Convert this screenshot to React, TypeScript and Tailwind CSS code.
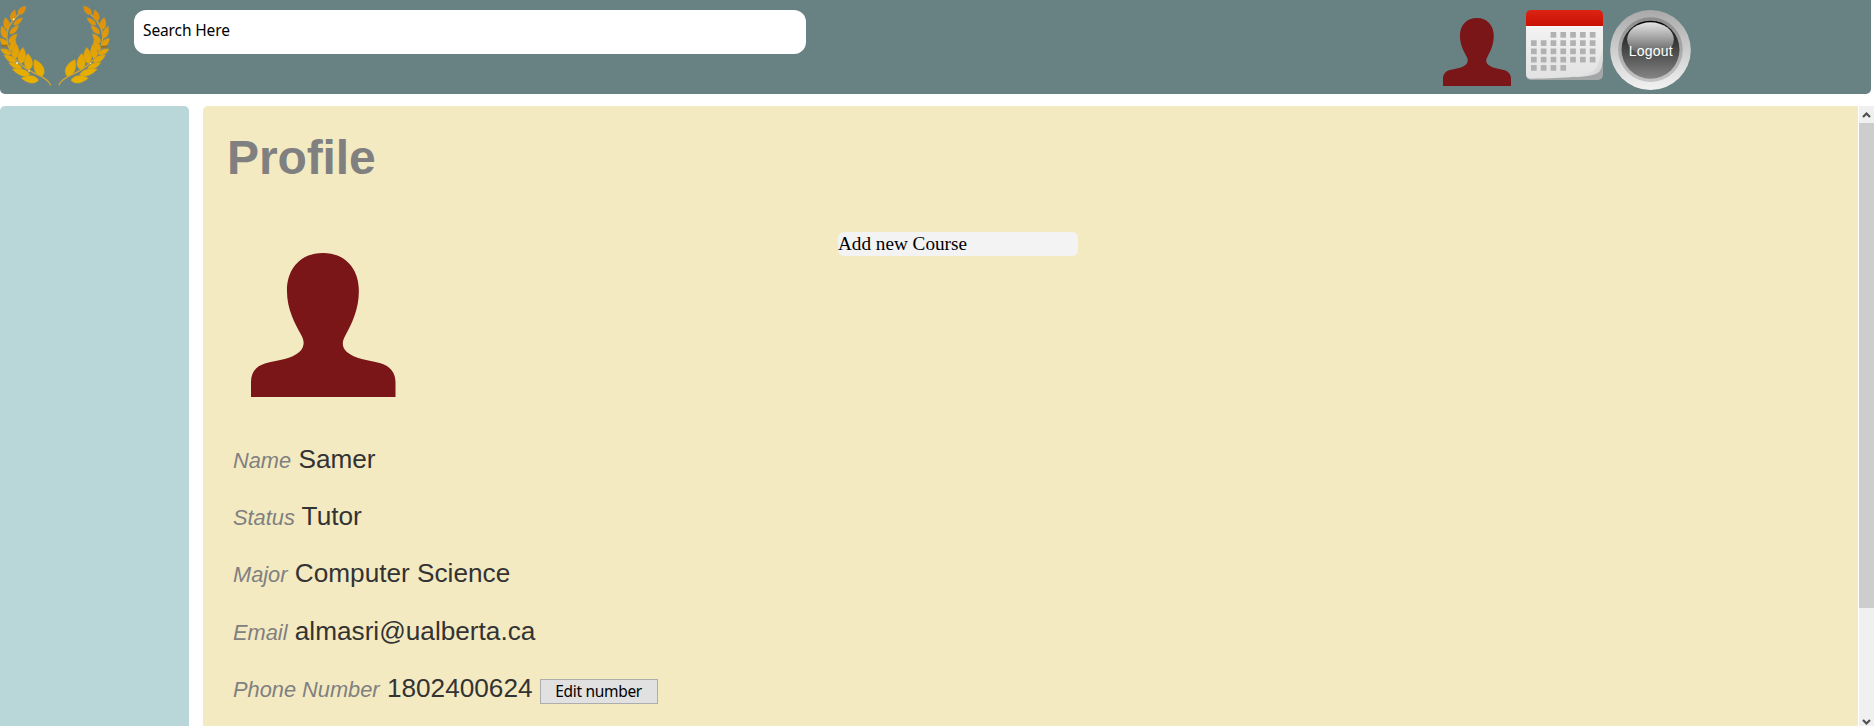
import React from "react";

type Leaf = [number, number, number, number, number];

// base x, base y, tip x, tip y, half width
const leaves: Leaf[] = [
  [55, 43, 78, 18, 13],
  [36, 63, 44, 29, 13],
  [41, 75, 68, 53, 10],
  [23, 90, 16, 52, 14],
  [30, 102, 56, 76, 11],
  [18, 115, 4, 78, 13],
  [27, 129, 51, 101, 12],
  [22, 139, 0, 114, 12],
  [32, 153, 46, 118, 14],
  [33, 163, 1, 147, 12],
  [44, 176, 50, 132, 16],
  [49, 187, 12, 165, 13],
  [63, 191, 69, 142, 18],
  [66, 206, 26, 188, 12],
  [87, 210, 83, 160, 19],
  [90, 225, 36, 207, 15],
  [128, 229, 103, 178, 21],
  [116, 241, 63, 234, 17],
];

function leafPath([bx, by, tx, ty, w]: Leaf): string {
  const dx = tx - bx;
  const dy = ty - by;
  const len = Math.hypot(dx, dy);
  const nx = (-dy / len) * w;
  const ny = (dx / len) * w;
  const ax = bx + dx * 0.2;
  const ay = by + dy * 0.2;
  const cx = bx + dx * 0.65;
  const cy = by + dy * 0.65;
  return `M${bx} ${by}C${ax + nx} ${ay + ny} ${cx + nx * 0.8} ${cy + ny * 0.8} ${tx} ${ty}C${cx - nx * 0.8} ${cy - ny * 0.8} ${ax - nx} ${ay - ny} ${bx} ${by}Z`;
}

function Branch() {
  return (
    <>
      <path d="M152 256C148 242 128 230 105 220C62 200 28 166 21 122C17 92 33 63 60 40" fill="none" stroke="#d6a52a" strokeWidth="4" />
      {leaves.map((l, i) => (
        <path key={i} d={leafPath(l)} fill="url(#gold)" stroke="#ad9645" strokeWidth="1" />
      ))}
    </>
  );
}

function Wreath() {
  return (
    <svg className="block h-[87px] w-[110px]" viewBox="0 0 330 261">
      <defs>
        <linearGradient id="gold" gradientUnits="userSpaceOnUse" x1="0" y1="18" x2="0" y2="256">
          <stop offset="0" stopColor="#dd8b0c" />
          <stop offset="1" stopColor="#e8b400" />
        </linearGradient>
      </defs>
      <Branch />
      <g transform="translate(328.5 0) scale(-1 1)">
        <Branch />
      </g>
      <g fill="#fff3c4">
        <circle cx="41" cy="58" r="3" />
        <circle cx="51" cy="189" r="3" />
        <circle cx="87" cy="213" r="2.5" />
        <circle cx="272" cy="190" r="2" />
      </g>
      <path d="M5 137h17M302 140h19" stroke="#9b6b10" strokeWidth="5" />
    </svg>
  );
}

function Person({ className }: { className: string }) {
  return (
    <svg className={className} viewBox="0 0 434 432" preserveAspectRatio="none">
      <path
        fill="#7a1518"
        d="M216 0C151 0 108 45 108 113C108 170 133 213 152 248C161 265 161 282 145 297C122 318 85 320 44 331C14 340 0 358 0 388V432H434V388C434 358 418 340 389 331C349 320 312 318 288 297C272 282 273 265 283 248C302 213 324 170 324 113C324 45 281 0 216 0Z"
      />
    </svg>
  );
}

function Calendar() {
  const cells: [number, number][] = [];
  for (let r = 0; r < 5; r++) {
    for (let c = 0; c < 7; c++) {
      if ((r === 0 && c < 2) || (r === 4 && c > 3)) continue;
      cells.push([c, r]);
    }
  }
  return (
    <svg className="block h-[70px] w-[77px]" viewBox="0 0 231 210">
      <defs>
        <linearGradient id="red" x1="0" y1="0" x2="0" y2="1">
          <stop offset="0" stopColor="#dc2414" />
          <stop offset="1" stopColor="#c71103" />
        </linearGradient>
        <linearGradient id="paper" x1="0" y1="0" x2="0" y2="1">
          <stop offset="0" stopColor="#f3f3f3" />
          <stop offset="1" stopColor="#e2e2e2" />
        </linearGradient>
        <linearGradient id="fold" x1="0" y1="0" x2="1" y2="0.7">
          <stop offset="0" stopColor="#ffffff" />
          <stop offset="1" stopColor="#d5d5d5" />
        </linearGradient>
      </defs>
      <rect y="8" width="231" height="202" rx="15" fill="#a4a7a7" />
      <path d="M0 40H231V120C231 160 227 178 215 186C185 200 120 204 15 206Q0 206 0 191Z" fill="url(#paper)" />
      <path d="M231 112C222 145 218 160 210 174C200 188 175 192 140 201C185 201 216 195 223 181C230 168 231 140 231 112Z" fill="url(#fold)" />
      <path d="M0 49V16Q0 0 16 0H215Q231 0 231 16V49Z" fill="url(#red)" />
      <path d="M0 50H231" stroke="#fff" strokeWidth="3" />
      {cells.map(([c, r]) => (
        <rect key={`${c}-${r}`} x={15 + c * 29.4} y={66 + r * 24.8} width="17" height="17" fill="#b1b1b1" />
      ))}
    </svg>
  );
}

function Logout() {
  return (
    <svg className="block h-[80px] w-[81px]" viewBox="0 0 243 240" preserveAspectRatio="none">
      <defs>
        <linearGradient id="rim" x1="0" y1="0" x2="0" y2="1">
          <stop offset="0" stopColor="#a9a9a9" />
          <stop offset="1" stopColor="#f2f2f2" />
        </linearGradient>
        <linearGradient id="ring" x1="0" y1="0" x2="0" y2="1">
          <stop offset="0" stopColor="#8b8b8b" />
          <stop offset="1" stopColor="#c5c5c5" />
        </linearGradient>
        <linearGradient id="core" x1="0" y1="0" x2="0" y2="1">
          <stop offset="0" stopColor="#000" />
          <stop offset="0.35" stopColor="#343434" />
          <stop offset="1" stopColor="#858585" />
        </linearGradient>
        <linearGradient id="gloss" x1="0" y1="0" x2="0" y2="1">
          <stop offset="0" stopColor="#e4e4e4" />
          <stop offset="1" stopColor="#555" />
        </linearGradient>
      </defs>
      <ellipse cx="121.5" cy="120" rx="121" ry="120" fill="url(#rim)" />
      <circle cx="121.5" cy="119" r="97" fill="url(#ring)" />
      <circle cx="121.5" cy="119" r="87" fill="url(#core)" />
      <ellipse cx="121.5" cy="88" rx="70" ry="51" fill="url(#gloss)" />
      <text x="122" y="139" textAnchor="middle" fill="#fff" fontSize="42" textLength="132" className="font-['Liberation_Sans',sans-serif]">
        Logout
      </text>
    </svg>
  );
}

function Row({ label, value, children }: { label: string; value: string; children?: React.ReactNode }) {
  return (
    <div className="flex h-[57.2px] items-baseline whitespace-pre font-['Liberation_Sans',sans-serif] leading-[30px]">
      <span className="text-[21.8px] italic text-[#808080]">{label}</span>
      <span className="text-[26.2px] text-[#333]"> {value}</span>
      {children}
    </div>
  );
}

export default function App() {
  return (
    <div className="flex h-[726px] w-full flex-col gap-3 overflow-hidden bg-white">
      <header className="flex h-[94px] w-[1871px] shrink-0 items-start rounded-b-[5px] bg-[#688284]">
        <Wreath />
        <div className="mt-[10px] ml-[24px] flex h-[44px] w-[672px] items-center rounded-[12px] bg-white pb-[3px] pl-[9px] font-['Noto_Sans',sans-serif] text-[15.5px] text-black">
          <span className="tracking-[-0.12px]">Search Here</span>
        </div>
        <Person className="mt-[18px] ml-[637px] block h-[68px] w-[68px]" />
        <div className="mt-[10px] ml-[15px]">
          <Calendar />
        </div>
        <div className="mt-[10px] ml-[7px]">
          <Logout />
        </div>
      </header>
      <div className="flex min-h-0 flex-1">
        <aside className="w-[189px] shrink-0 rounded-t-[5px] bg-[#b9d6d8]" />
        <main className="ml-[14px] flex w-[1655px] shrink-0 rounded-tl-[5px] bg-[#f4eac2]">
          <div className="w-[635px] shrink-0 pt-[24px]">
            <h1 className="ml-[24px] font-['Liberation_Sans',sans-serif] text-[48px] leading-[56px] font-bold tracking-[-0.1px] text-[#808080]">Profile</h1>
            <Person className="mt-[67px] ml-[48px] block h-[144px] w-[144.5px]" />
            <div className="mt-[47px] ml-[30px]">
              <Row label="Name" value="Samer" />
              <Row label="Status" value="Tutor" />
              <Row label="Major" value="Computer Science" />
              <Row label="Email" value="almasri@ualberta.ca" />
              <Row label="Phone Number" value="1802400624">
                <button className="ml-[7px] h-[25px] w-[118px] border border-[#adadad] bg-[#e1e1e1] font-['Noto_Sans',sans-serif] text-[15.5px] leading-[23px] tracking-[-0.3px] text-black">
                  Edit number
                </button>
              </Row>
            </div>
          </div>
          <div className="mt-[126px] h-[24px] w-[240px] rounded-[6px] bg-[#f3f3f3] font-['Liberation_Serif',serif] text-[19.2px] leading-[24px] text-black">
            Add new Course
          </div>
        </main>
        <div className="ml-px flex w-[15px] shrink-0 flex-col bg-[#f0f0f0]">
          <svg className="h-[17px] w-[15px]" viewBox="0 0 15 17">
            <path d="M4 11L7.5 7.5L11 11" fill="none" stroke="#505050" strokeWidth="2.2" />
          </svg>
          <div className="h-[485px] bg-[#cdcdcd]" />
          <svg className="mt-auto h-[11px] w-[15px]" viewBox="0 0 15 11">
            <path d="M4 5L7.5 8.5L11 5" fill="none" stroke="#505050" strokeWidth="2.2" />
          </svg>
        </div>
      </div>
    </div>
  );
}
